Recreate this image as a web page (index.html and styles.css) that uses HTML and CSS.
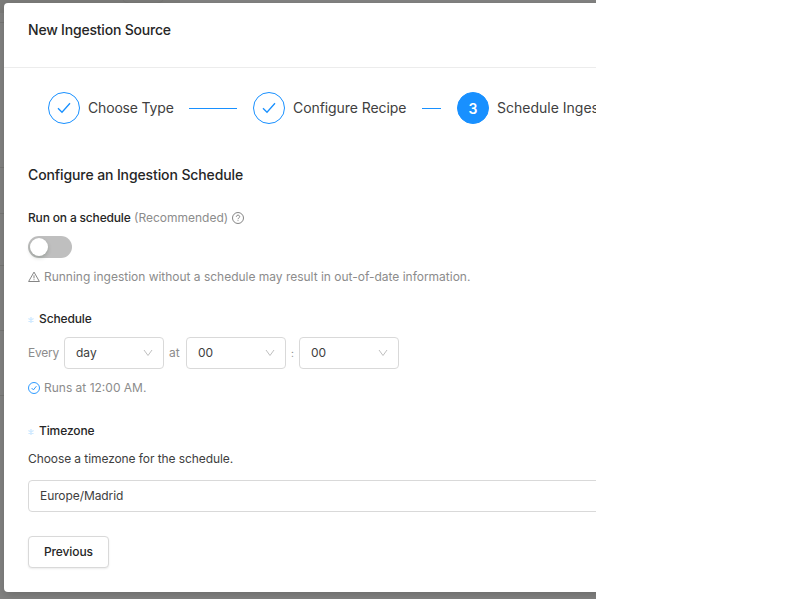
FILE: index.html
```
<!DOCTYPE html>
<html lang="en">
<head>
<meta charset="utf-8">
<title>New Ingestion Source</title>
<link rel="stylesheet" href="styles.css">
</head>
<body>
<div class="viewport">
  <svg class="backdrop" width="596" height="599" fill="none" stroke="#777775"><path fill="#7c7c7a" stroke="none" d="M0 0H180V13H0z"/><path d="M0 22.500H4M0 167.500H4M0 213.500H4M0 265.500H4M0 330.500H4M0 395.500H4M122 -1q2 4 7 4h28q5 0 7-4"/></svg>
  <main class="dialog">
    <header class="header"><h1 class="title">New Ingestion Source</h1></header>
    <div class="steps">
      <div class="step"><span class="dot"><svg width="16" height="16" viewBox="0 0 16 16"><path d="M2 8.200L6 12.300L14 3.200"/></svg></span><span class="step-label type">Choose Type</span></div>
      <i class="line"></i>
      <div class="step"><span class="dot"><svg width="16" height="16" viewBox="0 0 16 16"><path d="M2 8.200L6 12.300L14 3.200"/></svg></span><span class="step-label recipe">Configure Recipe</span></div>
      <i class="line short"></i>
      <div class="step"><span class="dot active">3</span><span class="step-label ingest">Schedule Ingestion</span></div>
    </div>
    <h2 class="section-title">Configure an Ingestion Schedule</h2>
    <div class="row run-row"><strong class="run">Run on a schedule</strong><span class="recommended">(Recommended)</span><svg class="icon help" width="12" height="12" viewBox="0 0 12 12"><circle cx="6" cy="6" r="5.500"/><path d="M4.300 4.800C4.300 2.600 7.700 2.600 7.700 4.700C7.700 5.900 6 5.900 6 7.200M6 8.300V9.100"/></svg></div>
    <button class="switch" aria-label="Run on a schedule"><span class="knob"></span></button>
    <div class="row warning"><svg class="icon" width="12" height="12" viewBox="0 0 12 12"><path d="M6 1.100L11.400 10.500H.6zM6 4.300V7.400M6 8.300V9.200"/></svg><span class="warning-text">Running ingestion without a schedule may result in out-of-date information.</span></div>
    <div class="row schedule-label"><svg class="star" width="6" height="6" viewBox="0 0 6 6"><path d="M3 0V6M.4 1.500L5.600 4.500M.4 4.500L5.600 1.500"/></svg><strong class="sched">Schedule</strong></div>
    <div class="row time-row">
      <span class="every">Every</span>
      <div class="select"><span class="day">day</span><svg width="10" height="8" viewBox="0 0 10 8"><path d="M1 1L5 6.500L9 1"/></svg></div>
      <span class="at">at</span>
      <div class="select"><span class="number">00</span><svg width="10" height="8" viewBox="0 0 10 8"><path d="M1 1L5 6.500L9 1"/></svg></div>
      <span class="colon">:</span>
      <div class="select"><span class="number">00</span><svg width="10" height="8" viewBox="0 0 10 8"><path d="M1 1L5 6.500L9 1"/></svg></div>
    </div>
    <div class="row runs"><svg class="icon ok" width="12" height="12" viewBox="0 0 12 12"><circle cx="6" cy="6" r="5.500"/><path d="M3.600 6L5.400 7.900L8.400 4.200"/></svg><span class="runs-text">Runs at 12:00 AM.</span></div>
    <div class="row timezone-label"><svg class="star" width="6" height="6" viewBox="0 0 6 6"><path d="M3 0V6M.4 1.500L5.600 4.500M.4 4.500L5.600 1.500"/></svg><strong class="tz">Timezone</strong></div>
    <div class="row help-row"><span class="help-text">Choose a timezone for the schedule.</span></div>
    <div class="timezone"><span class="zone">Europe/Madrid</span></div>
    <button class="previous"><span class="prev-text">Previous</span></button>
  </main>
</div>
</body>
</html>
```
FILE: styles.css
```
* { box-sizing: border-box; }
body { margin: 0; background: #fff; font: 12px/20px Inter, "Noto Sans", sans-serif; color: #404040; height: 599px; overflow: hidden; }
.viewport { position: relative; width: 596px; height: 599px; background: #838382; padding: 3px 0 0 4px; overflow: hidden; }
.backdrop { position: absolute; left: 0; top: 0; }
.dialog { position: relative; width: 720px; height: 589px; background: #fff; border-radius: 4px; box-shadow: 0 3px 10px rgba(0,0,0,.18); white-space: nowrap; }
.header { height: 65px; border-bottom: 1px solid #ececec; padding: 17px 24px 0; }
h1, h2 { margin: 0; font-size: 14px; line-height: 20px; font-weight: 500; color: #262626; }
.title { letter-spacing: -.2px; }
.row, .step, .steps { display: flex; align-items: center; }
.row { height: 20px; margin-left: 24px; }
strong { font-weight: 500; color: #262626; }
svg { flex: none; }
.steps { height: 32px; margin: 24px 0 0 44px; }
.step { gap: 8px; flex: none; }
.step-label { font-size: 14px; }
.type { width: 86px; letter-spacing: -.17px; }
.recipe { width: 114px; letter-spacing: -.08px; }
.dot { width: 32px; height: 32px; border: 1px solid #1890ff; border-radius: 50%; display: flex; align-items: center; justify-content: center; flex: none; }
.dot svg { fill: none; stroke: #1890ff; stroke-width: 1.3; }
.active { background: #1890ff; color: #fff; font-size: 14px; font-weight: 600; padding-top: 1px; }
.line { height: 1px; width: 48px; background: #1890ff; margin: 0 16px 0 15px; flex: none; }
.short { width: 19px; margin: 0 16px 0 15px; }
.section-title { margin: 41px 0 0 24px; letter-spacing: -.11px; }
.run-row { margin-top: 23px; }
.run { width: 106px; letter-spacing: -.17px; }
.recommended, .warning, .runs, .time-row { color: #8c8c8c; }
.recommended { width: 98px; }
.icon { fill: none; stroke: #777; stroke-width: .9; }
.ok { stroke: #1890ff; }
.switch { display: block; width: 44px; height: 22px; border: 0; border-radius: 11px; background: #bfbfbf; padding: 2px; margin: 8px 0 0 24px; }
.knob { display: block; width: 18px; height: 18px; border-radius: 50%; background: #fff; box-shadow: 0 2px 4px rgba(0,35,11,.2); }
.warning, .runs { gap: 4px; }
.warning { margin-top: 9px; }
.warning-text { letter-spacing: -.015px; }
.schedule-label { margin-top: 22px; gap: 5px; }
.sched, .tz { letter-spacing: -.12px; }
.star { stroke: #cfe9ff; fill: none; stroke-width: 1.3; margin-top: 2px; }
.time-row { height: 32px; margin-top: 8px; }
.every { width: 36px; letter-spacing: -.2px; }
.at { width: 22px; padding-left: 5px; }
.colon { width: 13px; padding-left: 5px; font-size: 10px; }
.select { width: 100px; height: 32px; border: 1px solid #d9d9d9; border-radius: 4px; padding: 0 10px 0 11px; display: flex; align-items: center; justify-content: space-between; color: #404040; flex: none; }
.select svg { fill: none; stroke: #bfbfbf; }
.runs { margin-top: 9px; }
.timezone-label { margin-top: 23px; gap: 5px; }
.help-row { margin-top: 8px; }
.help-text, .zone { letter-spacing: -.085px; }
.timezone { height: 32px; border: 1px solid #d9d9d9; border-radius: 4px; margin: 11px 24px 0; padding: 5px 11px; }
.previous { display: block; width: 81px; height: 32px; margin: 24px 0 0 24px; border: 1px solid #d9d9d9; border-radius: 4px; background: #fff; box-shadow: 0 1px 2px rgba(0,0,0,.08); padding: 0 0 0 15px; text-align: left; font: 500 12px/20px Inter, "Noto Sans", sans-serif; color: #262626; letter-spacing: -.12px; }
```
